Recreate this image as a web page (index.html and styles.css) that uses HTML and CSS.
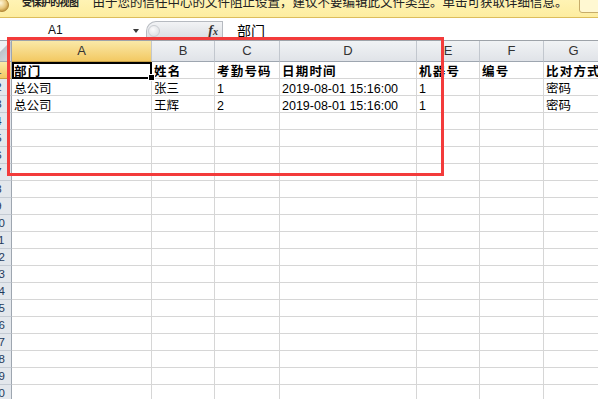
FILE: index.html
```html
<!DOCTYPE html>
<html>
<head lang="zh">
    <meta charset="UTF-8">
    <title>Sheet1</title>
    <link rel="stylesheet" href="styles.css">
</head>
<body>
<div class="msg-bar">
    <svg class="shield" width="14" height="14" viewBox="0 0 14 14">
        <defs>
            <radialGradient id="gold" cx="40%" cy="35%" r="70%">
                <stop offset="0" stop-color="#fff6d8"/>
                <stop offset="0.6" stop-color="#e7c77c"/>
                <stop offset="1" stop-color="#b88a35"/>
            </radialGradient>
        </defs>
        <circle cx="7" cy="5" r="6.5" fill="url(#gold)" stroke="#a77a2c" stroke-width="0.8"/>
    </svg>
    <span class="msg-title">受保护的视图</span>
    <span class="msg-text">由于您的信任中心的文件阻止设置，建议不要编辑此文件类型。单击可获取详细信息。</span>
    <span class="msg-btn"></span>
</div>

<div class="formula-bar">
    <div class="name-box">
        <span>A1</span>
        <span class="drop"></span>
    </div>
    <div class="fx-box">
        <span class="knob"></span>
        <span class="fx">f<small>x</small></span>
    </div>
    <div class="formula-text">部门</div>
</div>

<table class="sheet">
    <tr class="col-head">
        <th class="corner"></th>
        <th class="w-a sel">A</th>
        <th class="w-b">B</th>
        <th class="w-c">C</th>
        <th class="w-d">D</th>
        <th class="w-e">E</th>
        <th class="w-f">F</th>
        <th class="w-g">G</th>
    </tr>
    <tr class="bold">
        <th class="sel">1</th>
        <td class="active">部门</td><td>姓名</td><td>考勤号码</td><td>日期时间</td><td>机器号</td><td>编号</td><td>比对方式</td>
    </tr>
    <tr>
        <th>2</th>
        <td>总公司</td><td>张三</td><td>1</td><td>2019-08-01 15:16:00</td><td>1</td><td></td><td>密码</td>
    </tr>
    <tr>
        <th>3</th>
        <td>总公司</td><td>王辉</td><td>2</td><td>2019-08-01 15:16:00</td><td>1</td><td></td><td>密码</td>
    </tr>
    <tr><th>4</th><td></td><td></td><td></td><td></td><td></td><td></td><td></td></tr>
    <tr><th>5</th><td></td><td></td><td></td><td></td><td></td><td></td><td></td></tr>
    <tr><th>6</th><td></td><td></td><td></td><td></td><td></td><td></td><td></td></tr>
    <tr><th>7</th><td></td><td></td><td></td><td></td><td></td><td></td><td></td></tr>
    <tr><th>8</th><td></td><td></td><td></td><td></td><td></td><td></td><td></td></tr>
    <tr><th>9</th><td></td><td></td><td></td><td></td><td></td><td></td><td></td></tr>
    <tr><th>10</th><td></td><td></td><td></td><td></td><td></td><td></td><td></td></tr>
    <tr><th>11</th><td></td><td></td><td></td><td></td><td></td><td></td><td></td></tr>
    <tr><th>12</th><td></td><td></td><td></td><td></td><td></td><td></td><td></td></tr>
    <tr><th>13</th><td></td><td></td><td></td><td></td><td></td><td></td><td></td></tr>
    <tr><th>14</th><td></td><td></td><td></td><td></td><td></td><td></td><td></td></tr>
    <tr><th>15</th><td></td><td></td><td></td><td></td><td></td><td></td><td></td></tr>
    <tr><th>16</th><td></td><td></td><td></td><td></td><td></td><td></td><td></td></tr>
    <tr><th>17</th><td></td><td></td><td></td><td></td><td></td><td></td><td></td></tr>
    <tr><th>18</th><td></td><td></td><td></td><td></td><td></td><td></td><td></td></tr>
    <tr><th>19</th><td></td><td></td><td></td><td></td><td></td><td></td><td></td></tr>
    <tr><th>20</th><td></td><td></td><td></td><td></td><td></td><td></td><td></td></tr>
</table>

<div class="mark"></div>
</body>
</html>
```

FILE: styles.css
```css
*{
    margin: 0;
    padding: 0;
    box-sizing: border-box;
}
body{
    width: 598px;
    height: 399px;
    overflow: hidden;
    position: relative;
    background: #fff;
    font-family: "Liberation Sans", "Noto Sans CJK SC", sans-serif;
}

/* protected view bar */
.msg-bar{
    height: 18px;
    display: flex;
    align-items: flex-start;
    overflow: hidden;
    background: linear-gradient(#fff3b4, #fdeda0);
    border-bottom: 1px solid #dcbd5c;
    font-size: 12.5px;
    line-height: 12px;
    color: #222;
    position: relative;
}
.shield{
    margin-left: -5px;
    flex: none;
}
.msg-title{
    margin-left: 13px;
    margin-top: -3px;
    font-size: 10px;
    line-height: 12px;
    letter-spacing: -0.6px;
    font-weight: bold;
    white-space: nowrap;
}
.msg-text{
    margin-left: 14px;
    margin-top: -3px;
    white-space: nowrap;
}
.msg-btn{
    position: absolute;
    right: -4px;
    top: -3px;
    width: 23px;
    height: 16px;
    border: 1px solid #c6ac6a;
    border-radius: 3px;
    background: #fff8d2;
}

/* formula bar */
.formula-bar{
    height: 23px;
    display: flex;
    align-items: flex-end;
    border-bottom: 1px solid #9ea3a9;
}
.name-box{
    width: 143px;
    height: 20px;
    padding: 0 4px 0 48px;
    display: flex;
    align-items: center;
    justify-content: space-between;
    font-size: 12px;
    color: #111;
}
.drop{
    width: 0;
    height: 0;
    border-left: 3.5px solid transparent;
    border-right: 3.5px solid transparent;
    border-top: 4px solid #3a3a3a;
    margin-top: 2px;
}
.fx-box{
    margin-left: 3px;
    width: 77px;
    height: 19px;
    display: flex;
    align-items: center;
    justify-content: space-between;
    padding: 0 4px 0 1px;
    border: 1px solid #b6bac0;
    border-bottom: none;
    border-radius: 10px 0 0 0;
    background: linear-gradient(#f2f3f5, #d9dce0);
}
.knob{
    width: 12px;
    height: 12px;
    border-radius: 50%;
    border: 1px solid #c9ccd1;
    background: radial-gradient(circle at 40% 35%, #fbfbfc, #d6d9dd);
}
.fx{
    font-family: "Liberation Serif", serif;
    font-style: italic;
    font-weight: bold;
    font-size: 14px;
    color: #333;
}
.fx small{
    font-size: 10px;
}
.formula-text{
    padding-left: 14px;
    height: 20px;
    font-family: "Noto Sans CJK SC", sans-serif;
    font-size: 14px;
    line-height: 20px;
    color: #000;
}

/* sheet */
.sheet{
    border-spacing: 0;
    table-layout: fixed;
    width: 618px;
    margin-left: -14px;
    font-size: 12.5px;
    color: #000;
}
.sheet th{
    font-weight: normal;
    height: 17px;
    font-size: 11.5px;
    color: #1f3a5c;
    background: #e3e7ec;
    border-right: 1px solid #9ea6b0;
    border-bottom: 1px solid #c5cbd3;
    text-align: center;
    line-height: 16px;
}
.sheet .col-head th{
    height: 21px;
    font-size: 13px;
    color: #333;
    line-height: 20px;
    background: linear-gradient(#f1f3f5, #e0e3e8);
    border-right: 1px solid #c2c7ce;
    border-bottom: 1px solid #9ea6b0;
}
.sheet .col-head th.corner{
    width: 26px;
    border-right: 1px solid #9ea6b0;
    background: linear-gradient(135deg, #eef0f3 55%, #bcc2ca 56%, #d5d9de);
}
.sheet .col-head th.sel,
.sheet th.sel{
    background: linear-gradient(#fae9a8, #f3c963);
    border-bottom-color: #c7a044;
}
.sheet .col-head .w-a{ width: 140px; }
.sheet .col-head .w-b{ width: 63px; }
.sheet .col-head .w-c{ width: 65px; }
.sheet .col-head .w-d{ width: 137px; }
.sheet .col-head .w-e{ width: 63px; }
.sheet .col-head .w-f{ width: 64px; }
.sheet .col-head .w-g{ width: 60px; }

.sheet td{
    height: 17px;
    padding: 0 0 0 2px;
    border-right: 1px solid #d6d6d6;
    border-bottom: 1px solid #d6d6d6;
    line-height: 12px;
    vertical-align: bottom;
    white-space: nowrap;
}
.sheet .bold td{
    font-weight: bold;
    letter-spacing: 1.2px;
}
.sheet td.active{
    position: relative;
}
.sheet td.active::before{
    content: "";
    position: absolute;
    left: 0;
    top: 0;
    right: -1px;
    bottom: -1px;
    border: 2px solid #000;
}
.sheet td.active::after{
    content: "";
    position: absolute;
    right: -4px;
    bottom: -3px;
    width: 5px;
    height: 5px;
    background: #000;
    border: 1px solid #fff;
    box-sizing: content-box;
}

/* red annotation box */
.mark{
    position: absolute;
    left: 7px;
    top: 37px;
    width: 437px;
    height: 139px;
    border: 3px solid #f33b3b;
}
```
